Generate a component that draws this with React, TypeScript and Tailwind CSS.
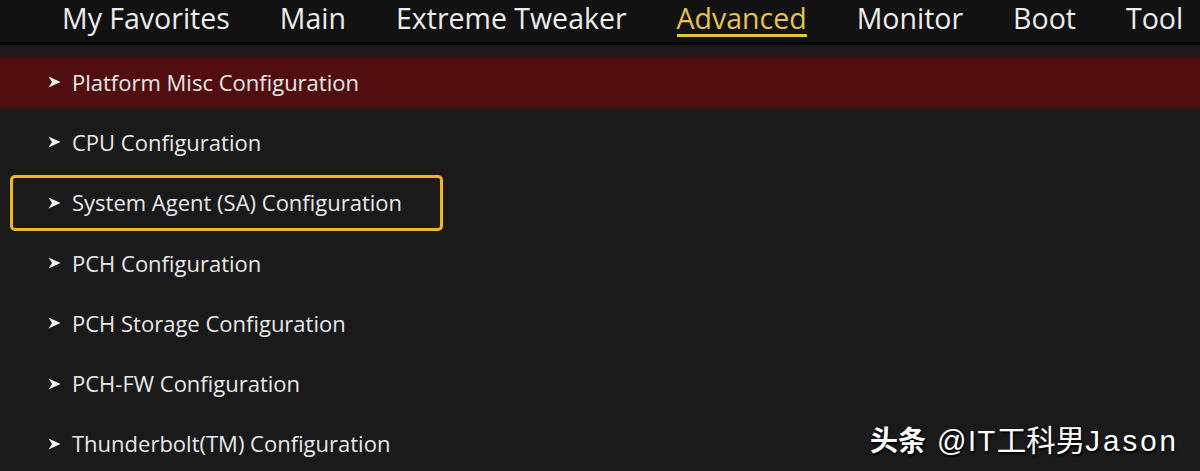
import React from "react";

const tabs = ["My Favorites", "Main", "Extreme Tweaker", "Advanced", "Monitor", "Boot", "Tool"];
const items = [
  "Platform Misc Configuration",
  "CPU Configuration",
  "System Agent (SA) Configuration",
  "PCH Configuration",
  "PCH Storage Configuration",
  "PCH-FW Configuration",
  "Thunderbolt(TM) Configuration",
];

function Arrow() {
  return (
    <svg width="13" height="12" viewBox="0 0 13 12" className="shrink-0">
      <path d="M0.5 0.5 L12.5 6 L0.5 11.5 L4 6 Z" fill="#f2f2f2" />
    </svg>
  );
}

export default function App() {
  return (
    <div
      className="relative w-[1200px] h-[471px] overflow-hidden bg-[#1a1a1b] text-[#e8e8e8]"
      style={{ fontFamily: '"Open Sans", "Noto Sans", sans-serif' }}
    >
      <div className="h-[42px] bg-[#121212] flex items-start pt-[4px] pl-[62px] gap-[50px] text-[28.5px] leading-none">
        {tabs.map((t) => (
          <div
            key={t}
            className={
              t === "Advanced"
                ? "text-[#e6c24e] pb-[1px] border-b-[3px] border-[#e6c24e]"
                : "text-[#ececec]"
            }
          >
            {t}
          </div>
        ))}
      </div>
      <div className="h-[3px] bg-[#050505]" />
      <div className="pt-[7px] flex flex-col">
        {items.map((it, i) => (
          <div
            key={it}
            className={
              "h-[60.3px] flex items-center " +
              (i === 0
                ? "bg-[linear-gradient(to_bottom,#1a1a1b_0%,#520d0f_14%,#520d0f_86%,#1a1a1b_100%)]"
                : "")
            }
          >
            <div
              className={
                "ml-[10px] w-[433px] h-[56px] rounded-[5px] border-[3px] flex items-center pl-[35px] gap-[11px] text-[22px] " +
                (i === 2 ? "border-[#f2b623]" : "border-transparent")
              }
            >
              <Arrow />
              <span className="whitespace-nowrap">{it}</span>
            </div>
          </div>
        ))}
      </div>
      <div
        className="absolute left-[870px] top-[424px] flex items-baseline leading-none text-white whitespace-nowrap [text-shadow:1px_2px_2px_rgba(0,0,0,0.9)]"
        style={{ fontFamily: '"Liberation Sans", "Noto Sans CJK SC", sans-serif' }}
      >
        <span
          className="font-bold text-[28px] mr-[11px]"
          style={{ fontFamily: '"Noto Sans CJK SC", sans-serif' }}
        >
          头条
        </span>
        <span className="text-[29px] tracking-[1.5px]">@IT</span>
        <span className="text-[29.5px]" style={{ fontFamily: '"Noto Sans CJK SC", sans-serif' }}>
          工科男
        </span>
        <span className="text-[29.5px] tracking-[3px]">Jason</span>
      </div>
    </div>
  );
}
